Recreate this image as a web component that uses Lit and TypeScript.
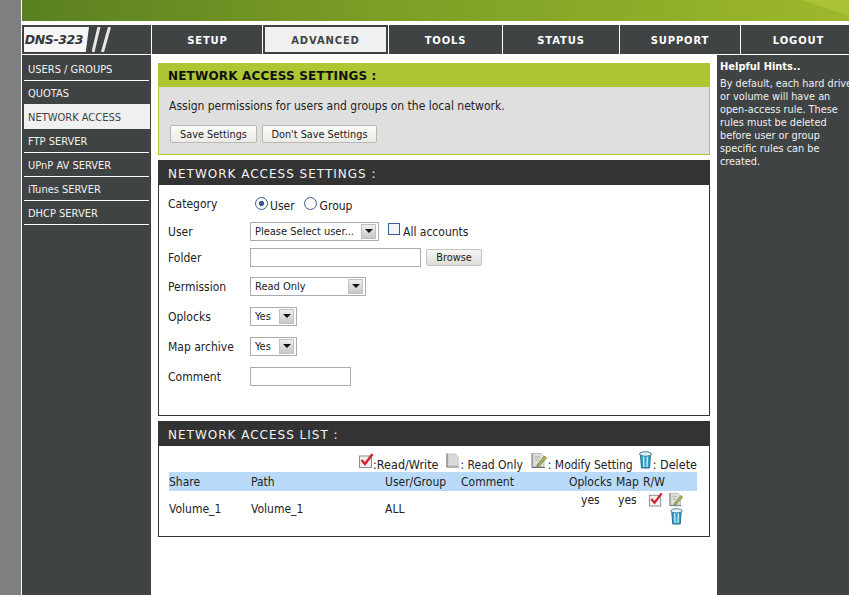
import { LitElement, html, css, svg } from "lit";
import { customElement } from "lit/decorators.js";

const checkIcon = (cls: string) => html`<svg class=${cls} viewBox="0 0 16 16"><rect x="1.5" y="3.5" width="12" height="11.5" fill="#f4f0ee" stroke="#8c8c94"/><path d="M3.5 7.5 L7 11.5 L14.5 1.5" fill="none" stroke="#d2222e" stroke-width="2.4"/></svg>`;
const docIcon = (cls: string) => html`<svg class=${cls} viewBox="0 0 15 17"><path d="M2 1.5 H10 L13 4.5 V14 H2 Z" fill="#dadada" stroke="#c4c4c4"/><path d="M1 1 V15.5 H14" fill="none" stroke="#666b6b" stroke-width="1.2"/></svg>`;
const editIcon = (cls: string) => html`<svg class=${cls} viewBox="0 0 17 17"><path d="M2 1.5 H10 L13 4.5 V14.5 H2 Z" fill="#dededa" stroke="#bcbcb8"/><path d="M1 1 V15.5 H14" fill="none" stroke="#666b6b"/><path d="M4 5 H9 M4 8 H8" stroke="#a8aca8"/><path d="M6 13 L13.5 4 L15.5 6 L8 14 L6 14.5 Z" fill="#b3b84a" stroke="#5f6630" stroke-width=".7"/></svg>`;
const trashIcon = (cls: string) => html`<svg class=${cls} viewBox="0 0 15 18">
  <path d="M2.5 4 L3.5 17 H11.5 L12.5 4 Z" fill="#2fa3c9" stroke="#1d5f7f" stroke-width=".9"/>
  <path d="M5.5 5 L6 16 M9.5 5 L9 16" stroke="#bfeaf4" stroke-width="1.5"/>
  <ellipse cx="7.5" cy="3" rx="6" ry="2.2" fill="#e4f5f8" stroke="#3f7589"/>
</svg>`;

const logoSlashes = svg`<path d="M7 0 L1 25 M17.5 0 L10.5 25" stroke="#e8e8e8" stroke-width="3" fill="none"/>`;

const sideItems = ["USERS / GROUPS", "QUOTAS", "NETWORK ACCESS", "FTP SERVER", "UPnP AV SERVER", "iTunes SERVER", "DHCP SERVER"];
const tabs = [
  { label: "SETUP", cls: "t1" },
  { label: "ADVANCED", cls: "t2 active" },
  { label: "TOOLS", cls: "t3" },
  { label: "STATUS", cls: "t4" },
  { label: "SUPPORT", cls: "t5" },
  { label: "LOGOUT", cls: "t6" },
];

@customElement("app-root")
export class AppRoot extends LitElement {
  static styles = css`
    :host {
      display: flex;
      width: 849px;
      height: 595px;
      overflow: hidden;
      background: #fff;
      font-family: "DejaVu Sans", Verdana, sans-serif;
      font-stretch: condensed;
      font-size: 12px;
      color: #222;
    }
    * { box-sizing: border-box; }
    .edge { width: 21px; flex: none; background: #7f7f7f; }
    .page { width: 828px; flex: none; display: flex; flex-direction: column; border-left: 1px solid #fff; }
    .banner {
      height: 21px; flex: none; position: relative; overflow: hidden;
      background: linear-gradient(90deg, #5a7f20 0%, #7a9c26 40%, #9db82b 100%);
    }
    .banner svg { position: absolute; right: 0; top: 0; width: 47px; height: 21px; }
    .nav { height: 30px; margin-top: 4px; flex: none; display: flex; border-bottom: 1px solid #fff; }
    .logo {
      width: 129px; flex: none; background: #404343; padding: 2px 0 2px 2px;
      display: flex; align-items: stretch;
    }
    .logo b {
      width: 65px; background: #f6f6f6; color: #33383a; font: italic bold 12.5px "DejaVu Sans", sans-serif;
      font-stretch: normal; letter-spacing: -0.4px; padding-right: 5px;
      display: flex; align-items: center; justify-content: center; white-space: nowrap;
      clip-path: polygon(0 0, 100% 0, 95% 100%, 0 100%);
    }
    .logo svg { width: 26px; height: 25px; margin-left: 3px; }
    .tab {
      flex: none; background: #404343; color: #fff; border-left: 1px solid #fff;
      display: flex; align-items: center; justify-content: center; padding-top: 1px;
      font: bold 10px "DejaVu Sans", sans-serif; letter-spacing: .85px;
    }
    .t1 { width: 112px; }
    .t2 { width: 125px; }
    .t3 { width: 114px; }
    .t4 { width: 117px; }
    .t5 { width: 121px; }
    .t6 { width: 110px; padding-left: 6px; }
    .tab.active { border: 2px solid #404343; background: #f0f0f0; color: #404343; box-shadow: -1px 0 0 #fff; }
    .below { flex: 1; display: flex; min-height: 0; }
    .side { width: 129px; flex: none; background: #404343; padding: 2px 2px 0 2px; }
    .side div {
      height: 24px; border-bottom: 1px solid #fff; color: #f2f2f2; padding: 2px 0 0 4px;
      display: flex; align-items: center; font-size: 11px; white-space: nowrap;
    }
    .side div.pre { border-bottom: 0; height: 23px; }
    .side div.on { background: #f0f0f0; color: #404343; border-bottom: 0; height: 25px; margin-right: -1px; }
    .main { width: 566px; flex: none; padding: 8px 7px 0 7px; display: flex; flex-direction: column; gap: 5px; }
    .box { border: 1px solid #333; background: #fff; }
    .h {
      height: 24px; background: #333; color: #f4f4f4; padding: 2px 0 0 10px; display: flex; align-items: center;
      font: 12px "DejaVu Sans", sans-serif; letter-spacing: 1px; white-space: nowrap;
    }
    .intro { height: 92px; background: #dfdfdf; border-color: #b0c638; display: flex; flex-direction: column; }
    .intro .h { background: #aec634; color: #111; font-weight: bold; letter-spacing: .18px; margin: -1px -1px 0; height: 24px; padding-top: 1px; }
    .intro p { margin: 12px 0 0 10px; font-size: 12px; }
    .btns { display: flex; gap: 5px; margin: 12px 0 0 11px; }
    .btn {
      height: 18px; border: 1px solid #b9b9b2; border-radius: 2px; background: linear-gradient(#fbfbf9, #ecebe5);
      display: flex; align-items: center; justify-content: center; font-size: 10.8px; color: #222;
    }
    .b1 { width: 87px; }
    .b2 { width: 115px; }
    .form { height: 256px; }
    .form .h { margin: -1px -1px 0; height: 25px; }
    .rows { padding: 8px 0 0 9px; display: flex; flex-direction: column; }
    .row { height: 20px; display: flex; align-items: center; margin-top: 10px; }
    .row.r1 { margin-top: 0; }
    .row.r2 { margin-top: 8px; }
    .row.r3 { margin-top: 6px; }
    .row.r4 { margin-top: 9px; }
    .row label { width: 82px; flex: none; font-size: 12px; margin-top: 2px; }
    .radio { display: flex; align-items: center; margin: 5px 0 0 5px; font-size: 12px; }
    .radio + .radio { margin-left: 9px; }
    .radio input {
      appearance: none; width: 13px; height: 13px; margin: -4px 2px 0 0; border: 1px solid #3e5a94; border-radius: 50%;
      background: #fbfbf8;
    }
    .radio + .radio input { margin-right: 3px; }
    .radio input:checked { background: radial-gradient(circle, #3e5a94 0 2.4px, #fbfbf8 3px); }
    .check { display: flex; align-items: center; margin: 2px 0 0 9px; font-size: 12px; }
    .check input { appearance: none; width: 12px; height: 12px; margin: -6px 3px 0 0; border: 1px solid #3e5a94; background: #f2f4f8; }
    .sel {
      height: 19px; border: 1px solid #a5acb2; background: #fff; display: flex; align-items: center; justify-content: space-between;
      padding: 0 2px 0 4px; font-size: 11px; white-space: nowrap;
    }
    .sel i {
      width: 15px; height: 15px; flex: none; background: linear-gradient(#eee, #c8c8c8); border: 1px solid #c0c0c0;
      display: flex; align-items: center; justify-content: center;
    }
    .sel i::after { content: ""; border: 4px solid transparent; border-top: 4px solid #111; border-bottom: 0; }
    .s1 { width: 129px; }
    .s2 { width: 116px; }
    .s3 { width: 47px; }
    .text { height: 19px; border: 1px solid #a5acb2; background: #fff; padding: 0; margin: 0; }
    .t-folder { width: 171px; }
    .t-comment { width: 101px; }
    .browse { width: 56px; height: 17px; margin-left: 5px; background: linear-gradient(#f6f6f4, #dedcd6); border-color: #c4c4bc; font-size: 10.8px; }
    .list { height: 116px; }
    .list .h { margin: -1px -1px 0; height: 25px; }
    .legend {
      margin: 5px 12px 0 0; height: 21px; display: flex; justify-content: flex-end; align-items: flex-end; font-size: 12px; white-space: nowrap;
    }
    .legend span { margin: 0 8px 0 0; }
    .legend span.near { margin-right: 5px; }
    .legend span:last-child { margin-right: 0; }
    .legend svg { margin-bottom: 3px; flex: none; }
    .legend .ic-c { width: 16px; height: 17px; margin-right: -1px; }
    .ic-d { width: 14px; height: 17px; }
    .ic-e { width: 17px; height: 17px; }
    .ic-t { width: 15px; height: 18px; }
    .rw { font-size: 12.5px; }
    table { margin: 0 0 0 10px; width: 528px; table-layout: fixed; border-collapse: collapse; font-size: 12px; }
    col.c1 { width: 82px; } col.c2 { width: 134px; } col.c3 { width: 76px; } col.c4 { width: 108px; }
    col.c5 { width: 47px; } col.c6 { width: 27px; } col.c7 { width: 54px; }
    th { height: 19px; background: #b9dbf9; font-weight: normal; text-align: left; padding: 0; white-space: nowrap; }
    td { padding: 0; height: 36px; vertical-align: middle; white-space: nowrap; }
    td.top { vertical-align: top; padding-top: 2px; }
    td.yes { padding-left: 12px; }
    td.yes2 { padding-left: 2px; }
    .acts { display: flex; flex-wrap: wrap; gap: 1px 6px; width: 54px; margin-top: -1px; }
    .acts svg { flex: none; }
    .acts .ic-t { margin-left: 26px; width: 15px; height: 17px; }
    .acts .a-c { width: 15px; height: 15px; margin-left: 5px; }
    .acts .a-e { width: 15px; height: 15px; }
    .hints { flex: 1; background: #404343; color: #f0f0f0; padding: 5px 0 0 3px; overflow: hidden; font-size: 10.8px; line-height: 13px; }
    .hints h4 { margin: 0 0 3px; font-size: 11px; font-weight: bold; color: #fff; line-height: 14px; white-space: nowrap; }
    .hints p { margin: 0; white-space: pre; }
  `;

  render() {
    return html`
      <div class="edge"></div>
      <div class="page">
        <div class="banner">
          <svg viewBox="0 0 47 21"><path d="M0 0 H47 V16 Z" fill="#aac236"/></svg>
        </div>
        <div class="nav">
          <div class="logo"><b>DNS-323</b><svg viewBox="0 0 26 25">${logoSlashes}</svg></div>
          ${tabs.map((t) => html`<div class="tab ${t.cls}">${t.label}</div>`)}
        </div>
        <div class="below">
          <div class="side">
            ${sideItems.map((s, i) => html`<div class=${i === 2 ? "on" : i === 1 ? "pre" : ""}>${s}</div>`)}
          </div>
          <div class="main">
            <section class="box intro">
              <div class="h">NETWORK ACCESS SETTINGS :</div>
              <p>Assign permissions for users and groups on the local network.</p>
              <div class="btns"><div class="btn b1">Save Settings</div><div class="btn b2">Don't Save Settings</div></div>
            </section>
            <section class="box form">
              <div class="h">NETWORK ACCESS SETTINGS :</div>
              <div class="rows">
                <div class="row r1">
                  <label>Category</label>
                  <span class="radio"><input type="radio" name="c" checked />User</span>
                  <span class="radio"><input type="radio" name="c" />Group</span>
                </div>
                <div class="row r2">
                  <label>User</label>
                  <div class="sel s1">Please Select user...<i></i></div>
                  <span class="check"><input type="checkbox" />All accounts</span>
                </div>
                <div class="row r3">
                  <label>Folder</label>
                  <input class="text t-folder" />
                  <div class="btn browse">Browse</div>
                </div>
                <div class="row r4">
                  <label>Permission</label>
                  <div class="sel s2">Read Only<i></i></div>
                </div>
                <div class="row"><label>Oplocks</label><div class="sel s3">Yes<i></i></div></div>
                <div class="row"><label>Map archive</label><div class="sel s3">Yes<i></i></div></div>
                <div class="row"><label>Comment</label><input class="text t-comment" /></div>
              </div>
            </section>
            <section class="box list">
              <div class="h">NETWORK ACCESS LIST :</div>
              <div class="legend">
                ${checkIcon("ic-c")}<span class="rw">:Read/Write</span>
                ${docIcon("ic-d")}<span>: Read Only</span>
                ${editIcon("ic-e")}<span class="near">: Modify Setting</span>
                ${trashIcon("ic-t")}<span class="rw">: Delete</span>
              </div>
              <table>
                <colgroup><col class="c1" /><col class="c2" /><col class="c3" /><col class="c4" /><col class="c5" /><col class="c6" /><col class="c7" /></colgroup>
                <tr><th>Share</th><th>Path</th><th>User/Group</th><th>Comment</th><th>Oplocks</th><th>Map</th><th>R/W</th></tr>
                <tr>
                  <td>Volume_1</td><td>Volume_1</td><td>ALL</td><td></td>
                  <td class="top yes">yes</td><td class="top yes2">yes</td>
                  <td class="top"><div class="acts">${checkIcon("a-c")}${editIcon("a-e")}${trashIcon("ic-t")}</div></td>
                </tr>
              </table>
            </section>
          </div>
          <aside class="hints">
            <h4>Helpful Hints..</h4>
            <p>By default, each hard drive
or volume will have an
open-access rule. These
rules must be deleted
before user or group
specific rules can be
created.</p>
          </aside>
        </div>
      </div>
    `;
  }
}
